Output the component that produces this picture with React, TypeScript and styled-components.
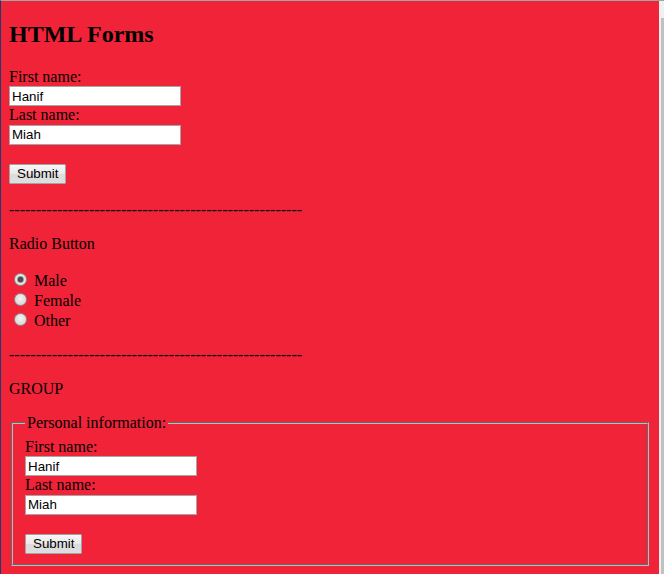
import * as React from 'react'
import styled, { createGlobalStyle } from 'styled-components'

const DASHES = '-'.repeat(55)

const GlobalStyle = createGlobalStyle`
    html,
    body {
        margin: 0;
        padding: 0;
        background: #f0f0f0;
    }
    body {
        font-family: 'Liberation Serif', 'Times New Roman', serif;
        font-size: 16px;
        color: #000000;
    }
`

type NameFieldsProps = { idPrefix: string }

const NameFields = ({ idPrefix }: NameFieldsProps) => (
    <>
        <FieldLabel htmlFor={`${idPrefix}-first`}>First name:</FieldLabel>
        <TextInput id={`${idPrefix}-first`} type="text" defaultValue="Hanif" />
        <FieldLabel htmlFor={`${idPrefix}-last`}>Last name:</FieldLabel>
        <TextInput id={`${idPrefix}-last`} type="text" defaultValue="Miah" />
        <SubmitButton type="button">Submit</SubmitButton>
    </>
)

const App = () => {
    const [gender, setGender] = React.useState<string>('male')

    return (
        <Window>
            <GlobalStyle />
            <Page>
                <Title>HTML Forms</Title>
                <NameForm onSubmit={(e) => e.preventDefault()}>
                    <NameFields idPrefix="simple" />
                </NameForm>
                <Paragraph>{DASHES}</Paragraph>
                <Paragraph>Radio Button</Paragraph>
                <RadioForm>
                    {[
                        ['male', 'Male'],
                        ['female', 'Female'],
                        ['other', 'Other'],
                    ].map(([value, label]) => (
                        <RadioRow key={value}>
                            <RadioInput
                                type="radio"
                                name="gender"
                                value={value}
                                checked={gender === value}
                                onChange={() => setGender(value)}
                            />{' '}
                            {label}
                        </RadioRow>
                    ))}
                </RadioForm>
                <Paragraph>{DASHES}</Paragraph>
                <Paragraph>GROUP</Paragraph>
                <form onSubmit={(e) => e.preventDefault()}>
                    <GroupBox>
                        <GroupLegend>Personal information:</GroupLegend>
                        <NameFields idPrefix="group" />
                    </GroupBox>
                </form>
            </Page>
            <Scrollbar>
                <ScrollThumb />
            </Scrollbar>
        </Window>
    )
}

export default App

const Window = styled.div`
    display: flex;
    height: 574px;
    box-sizing: border-box;
    border-top: 1px solid #a3a3a3;
    border-left: 1px solid #1c3b6c;
    overflow: hidden;
`
const Page = styled.div`
    flex: 1;
    min-width: 0;
    background: #f12338;
    padding: 0 8px;
    overflow: hidden;
`
const Scrollbar = styled.div`
    width: 5px;
    flex: none;
    background: #f0f0f0;
    padding: 17px 0 0 2px;
    box-sizing: border-box;
    display: flex;
`
const ScrollThumb = styled.div`
    flex: 1;
    background: #c1c1c1;
`
const Title = styled.h2`
    font-size: 24px;
    font-weight: bold;
    margin: 20px 0;
`
const NameForm = styled.form`
    margin: 0 0 17px;
`
const FieldLabel = styled.label`
    display: block;
    line-height: 18.4px;
`
const TextInput = styled.input`
    display: block;
    box-sizing: border-box;
    width: 172px;
    height: 20px;
    margin: 0;
    padding: 1px 2px;
    border: 1px solid #a5a5a5;
    background: #ffffff;
    font-family: 'Liberation Sans', Arial, sans-serif;
    font-size: 13.33px;
    color: #000000;
    outline: none;
`
const SubmitButton = styled.button`
    display: block;
    box-sizing: border-box;
    height: 20px;
    margin: 19px 0 0;
    padding: 0 7px;
    border: 1px solid #a3a3a3;
    border-radius: 1px;
    background: linear-gradient(#f7f7f7, #e9e9e9 50%, #dcdcdc 51%, #dedede);
    font-family: 'Liberation Sans', Arial, sans-serif;
    font-size: 13.33px;
    color: #000000;
`
const Paragraph = styled.p`
    margin: 16px 0;
    line-height: 18.4px;
`
const RadioForm = styled.form`
    margin: 0 0 15px;
`
const RadioRow = styled.label`
    display: block;
`
const RadioInput = styled.input`
    appearance: none;
    width: 13px;
    height: 13px;
    margin: 3px 3px 0 5px;
    box-sizing: border-box;
    border: 1px solid #8f8f8f;
    border-radius: 50%;
    background: radial-gradient(circle at 50% 40%, #f4f4f4, #d8d8d8 70%);
    vertical-align: baseline;

    &:checked {
        background: radial-gradient(circle, #4d4d4d 0 2.5px, #9a9a9a 3px, #e4e4e4 4px, #d8d8d8);
    }
`
const GroupBox = styled.fieldset`
    margin: 0 2px;
    padding: 0.35em 0.75em 0.625em;
    border: 2px groove #bcbcbc;
`
const GroupLegend = styled.legend`
    padding: 0 2px;
`
